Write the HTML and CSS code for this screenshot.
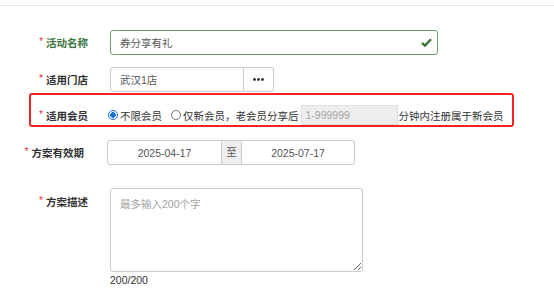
FILE: index.html
```html
<!DOCTYPE html>
<html lang="zh-CN">
<head>
    <meta charset="UTF-8">
    <title>方案设置</title>
    <link rel="stylesheet" href="styles.css">
</head>
<body>

<div class="top-line"></div>

<form class="plan-form">
    <div class="form-row row-name is-success">
        <label class="form-label"><span class="req">*</span>活动名称</label>
        <div class="control control-name">
            <input type="text" class="field" value="券分享有礼">
            <svg class="ok-icon" width="11" height="9" viewBox="0 0 11 9">
                <path d="M1 5 L4 7.6 L10 1.2" fill="none" stroke="#3c763d" stroke-width="2.4"/>
            </svg>
        </div>
    </div>

    <div class="form-row row-store">
        <label class="form-label"><span class="req">*</span>适用门店</label>
        <div class="control input-group">
            <input type="text" class="field field-store" value="武汉1店">
            <button type="button" class="more-btn">
                <svg width="11" height="3" viewBox="0 0 11 3">
                    <circle cx="1.5" cy="1.5" r="1.4" fill="#333"/>
                    <circle cx="5.5" cy="1.5" r="1.4" fill="#333"/>
                    <circle cx="9.5" cy="1.5" r="1.4" fill="#333"/>
                </svg>
            </button>
        </div>
    </div>

    <div class="form-row row-member">
        <label class="form-label"><span class="req">*</span>适用会员</label>
        <div class="control member-opts">
            <label class="radio"><input type="radio" name="member" checked>不限会员</label>
            <label class="radio"><input type="radio" name="member">仅新会员，老会员分享后</label>
            <input type="text" class="field field-minutes" placeholder="1-999999" disabled>
            <span class="after-text">分钟内注册属于新会员</span>
        </div>
    </div>

    <div class="form-row row-date">
        <label class="form-label"><span class="req">*</span>方案有效期</label>
        <div class="control input-group">
            <input type="text" class="field field-date date-start" value="2025-04-17">
            <span class="addon">至</span>
            <input type="text" class="field field-date date-end" value="2025-07-17">
        </div>
    </div>

    <div class="form-row row-desc">
        <label class="form-label"><span class="req">*</span>方案描述</label>
        <div class="control">
            <textarea class="field field-desc" placeholder="最多输入200个字"></textarea>
            <div class="counter">200/200</div>
        </div>
    </div>
</form>

</body>
</html>
```

FILE: styles.css
```css
body {
    margin: 0;
    padding: 0;
    background-color: #fff;
    font-family: "Liberation Sans", Arial, "Noto Sans CJK SC", sans-serif;
    font-size: 10.5px;
    color: #333;
}

.top-line {
    margin-top: 5px;
    height: 1px;
    background-color: #e5e5e5;
}

.plan-form {
    padding-top: 24px;
}

.form-row {
    display: flex;
    align-items: center;
}

.form-label {
    width: 88px;
    flex-shrink: 0;
    text-align: right;
    font-weight: bold;
    color: #333;
    white-space: nowrap;
}

.req {
    color: #e4393c;
    font-weight: normal;
    margin-right: 3px;
    position: relative;
    top: -2px;
}

.control {
    margin-left: 22px;
}

.field {
    box-sizing: border-box;
    height: 25px;
    border: 1px solid #ccc;
    border-radius: 3px;
    padding: 0 9px;
    font-family: inherit;
    font-size: 10.5px;
    color: #555;
    background-color: #fff;
    outline: none;
}

.field::placeholder {
    color: #a3a3a3;
}

/* 活动名称 */
.control-name {
    position: relative;
}

.control-name .field {
    width: 328px;
    border-color: #6f9a6f;
}

.is-success .form-label {
    color: #3c763d;
}

.ok-icon {
    position: absolute;
    right: 6px;
    top: 8px;
}

/* 适用门店 */
.row-store {
    margin-top: 12px;
}

.input-group {
    display: flex;
}

.field-store {
    width: 134px;
    border-radius: 3px 0 0 3px;
}

.more-btn {
    box-sizing: border-box;
    width: 30px;
    height: 25px;
    border: 1px solid #ccc;
    border-left: none;
    border-radius: 0 3px 3px 0;
    background-color: #fff;
    padding: 0;
    display: flex;
    align-items: center;
    justify-content: center;
    cursor: pointer;
}

/* 适用会员 */
.row-member {
    margin-top: 1px;
    margin-left: 29px;
    width: 485px;
    box-sizing: border-box;
    border: 2px solid #f52323;
    border-radius: 3px;
    padding-top: 10px;
    height: 34px;
}

.row-member .form-label {
    width: 57px;
}

.member-opts {
    display: flex;
    align-items: center;
    margin-left: 20px;
}

.radio {
    display: flex;
    align-items: center;
    white-space: nowrap;
    margin-right: 9px;
}

.radio:last-of-type {
    margin-right: 2px;
}

.radio input {
    appearance: none;
    box-sizing: border-box;
    width: 10px;
    height: 10px;
    margin: 0 2px 0 0;
    border: 1px solid #777;
    border-radius: 50%;
    background-color: #fff;
}

.radio input:checked {
    border-color: #1a6fe0;
    background: radial-gradient(circle, #1a6fe0 0 2.6px, #fff 3px);
}

.field-minutes {
    width: 97px;
    height: 20px;
    padding: 0 4px;
    background-color: #eee;
    border-color: #ddd;
    border-radius: 0;
}

.after-text {
    margin-left: 1px;
    white-space: nowrap;
}

/* 方案有效期 */
.row-date {
    margin-top: 13px;
}

.row-date .form-label {
    width: 84px;
}

.row-date .control {
    margin-left: 23px;
}

.field-date {
    width: 115px;
    text-align: center;
    color: #555;
}

.date-start {
    border-radius: 3px 0 0 3px;
}

.date-end {
    width: 114px;
    border-radius: 0 3px 3px 0;
}

.addon {
    box-sizing: border-box;
    width: 19px;
    height: 25px;
    line-height: 23px;
    text-align: center;
    background-color: #eee;
    border-top: 1px solid #ccc;
    border-bottom: 1px solid #ccc;
    color: #555;
}

/* 方案描述 */
.row-desc {
    margin-top: 23px;
    align-items: flex-start;
}

.row-desc .form-label {
    padding-top: 6px;
}

.field-desc {
    display: block;
    width: 253px;
    height: 84px;
    padding: 7px 9px;
    resize: vertical;
}

.counter {
    margin-top: 2px;
    color: #333;
    line-height: 12px;
}
```
